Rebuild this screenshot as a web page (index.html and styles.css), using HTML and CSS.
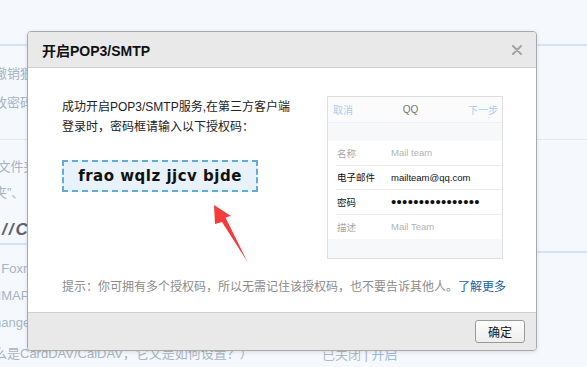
FILE: index.html
```html
<!DOCTYPE html>
<html lang="zh-CN">
<head>
    <meta charset="UTF-8">
    <meta name="viewport" content="width=device-width, initial-scale=1.0">
    <title>开启POP3/SMTP</title>
    <link rel="stylesheet" href="styles.css">
</head>
<body>
    <div class="page">
        <div class="page-left">
            <div class="sec sec-top">
                <div class="bg-row">撤销狠</div>
                <div class="bg-row">改密码</div>
            </div>
            <div class="sec sec-mid">
                <div class="bg-row">&nbsp;文件夹</div>
                <div class="bg-row">夹”、</div>
            </div>
            <div class="sec-head">//CardDAV</div>
            <div class="sec sec-low">
                <div class="bg-row">&nbsp; Foxmail</div>
                <div class="bg-row">&nbsp;IMAP，</div>
                <div class="bg-row">hange</div>
                <div class="bg-row bg-last">么是CardDAV/CalDAV，它又是如何设置？）</div>
            </div>
        </div>
        <div class="page-right">
            <div class="rsec rsec-top"></div>
            <div class="rsec rsec-mid"></div>
            <div class="rsec rsec-low"></div>
            <div class="bg-status">已关闭 | <span class="bg-link">开启</span></div>
        </div>
    </div>

    <div class="dialog">
        <div class="dialog-head">
            <span class="dialog-title">开启POP3/SMTP</span>
            <svg class="dialog-close" width="10" height="10" viewBox="0 0 10 10">
                <path d="M1 1 L9 9 M9 1 L1 9" stroke="#a3a3a3" stroke-width="2" stroke-linecap="round"/>
            </svg>
        </div>
        <div class="dialog-body">
            <div class="body-main">
                <div class="body-left">
                    <p class="intro">成功开启POP3/SMTP服务,在第三方客户端<br>登录时，密码框请输入以下授权码：</p>
                    <div class="code">frao wqlz jjcv bjde</div>
                    <svg class="arrow" width="38" height="60" viewBox="0 0 38 60">
                        <polygon points="2,2 19,13 13.5,14.5 35.5,59 10,19 3,21" fill="#f43c3c"/>
                    </svg>
                </div>
                <div class="shot">
                    <div class="shot-head">
                        <span class="shot-btn">取消</span>
                        <span class="shot-title">QQ</span>
                        <span class="shot-btn">下一步</span>
                    </div>
                    <div class="shot-gap"></div>
                    <div class="shot-list">
                        <div class="shot-row"><span class="shot-label">名称</span><span class="shot-hint">Mail team</span></div>
                        <div class="shot-row"><span class="shot-label on">电子邮件</span><span class="shot-val">mailteam@qq.com</span></div>
                        <div class="shot-row"><span class="shot-label on">密码</span><span class="shot-dots">••••••••••••••••</span></div>
                        <div class="shot-row"><span class="shot-label">描述</span><span class="shot-hint">Mail Team</span></div>
                    </div>
                </div>
            </div>
            <p class="tip">提示：你可拥有多个授权码，所以无需记住该授权码，也不要告诉其他人。<a class="tip-link" href="#">了解更多</a></p>
        </div>
        <div class="dialog-foot">
            <button class="btn">确定</button>
        </div>
    </div>
</body>
</html>
```

FILE: styles.css
```css
body {
    margin: 0;
    height: 367px;
    overflow: hidden;
    background: #f5f8fc;
    font-family: "Liberation Sans", "Noto Sans CJK SC", sans-serif;
    font-size: 12px;
    position: relative;
}

/* page behind the dialog */
.page {
    display: flex;
    height: 367px;
    color: #a7b4c4;
    font-size: 13px;
}

.page-left {
    width: 300px;
    margin-left: -6px;
    white-space: nowrap;
}

.page-right {
    flex: 1;
    padding-left: 28px;
}

.sec {
    border-top: 2px solid #d4e3f5;
}

.sec-top {
    margin-top: 44px;
    padding: 13px 0 22px;
}

.sec-mid {
    border-top: 1px solid #e3e8ee;
    padding-top: 14px;
}

.bg-row {
    height: 26px;
    line-height: 26px;
}

.sec-top .bg-row {
    height: 29px;
    line-height: 29px;
}

.sec-head {
    padding: 14px 0 3px 8px;
    line-height: 20px;
    font-size: 17px;
    font-weight: bold;
    font-style: italic;
    letter-spacing: 2px;
    color: #5f646b;
}

.sec-low {
    padding-top: 10px;
}

.sec-low .bg-row {
    height: 27px;
    line-height: 27px;
}

.bg-last {
    margin-top: 4px;
}

.rsec-top {
    margin-top: 44px;
    height: 93px;
    border-top: 2px solid #d4e3f5;
    border-bottom: 1px solid #e3e8ee;
}

.rsec-mid {
    height: 111px;
    border-bottom: 2px solid #d4e3f5;
}

.rsec-low {
    height: 93px;
}

.bg-status {
    line-height: 18px;
    color: #b0b8c2;
}

.bg-link {
    color: #9bbbe0;
}

/* dialog */
.dialog {
    position: absolute;
    left: 27px;
    top: 31px;
    width: 508px;
    border: 1px solid #a9a9a9;
    border-radius: 4px;
    background: #fff;
    box-shadow: 0 1px 4px rgba(0, 0, 0, 0.12);
    overflow: hidden;
}

.dialog-head {
    display: flex;
    align-items: center;
    justify-content: space-between;
    height: 35px;
    padding: 0 14px 0 14px;
    background: #e9e9e9;
    border-bottom: 1px solid #cfcfcf;
}

.dialog-title {
    font-size: 14px;
    font-weight: bold;
    color: #111;
}

.dialog-close {
    display: block;
    margin-top: 1px;
}

.dialog-body {
    padding: 28px 33px 16px 34px;
}

.body-main {
    display: flex;
    justify-content: space-between;
}

.intro {
    margin: 1px 0 0;
    line-height: 20px;
    color: #222;
}

.code {
    width: 192px;
    height: 28px;
    margin-top: 23px;
    border: 2px dashed #64acd6;
    background: #e7f2fa;
    text-align: center;
    line-height: 28px;
    font-family: "DejaVu Sans", sans-serif;
    font-size: 15px;
    font-weight: bold;
    letter-spacing: 0.5px;
    color: #111;
}

.arrow {
    display: block;
    margin: 11px 0 0 150px;
}

/* phone screenshot */
.shot {
    width: 174px;
    height: 161px;
    border: 1px solid #dedede;
    background: #f7f8fa;
    font-family: "Liberation Sans", "Noto Sans CJK SC", sans-serif;
    font-size: 9.5px;
}

.shot-head {
    display: flex;
    align-items: center;
    justify-content: space-between;
    height: 25px;
    padding: 0 4px 0 5px;
    background: #fbfbfc;
    border-bottom: 1px solid #eef0f2;
}

.shot-btn {
    color: #a9cdee;
    font-size: 10px;
}

.shot-title {
    color: #777;
    font-size: 10px;
}

.shot-gap {
    height: 18px;
}

.shot-list {
    background: #fff;
}

.shot-row {
    display: flex;
    align-items: center;
    height: 23.5px;
    margin-left: 8px;
    padding-left: 1px;
    border-bottom: 1px solid #ececec;
}

.shot-row:last-child {
    border-bottom: none;
    height: 24.5px;
}

.shot-label {
    width: 54px;
    color: #a6a6a6;
}

.shot-label.on {
    color: #111;
}

.shot-hint {
    color: #b3b3b3;
}

.shot-val {
    color: #111;
}

.shot-dots {
    color: #111;
    font-size: 15px;
    letter-spacing: 0.3px;
    line-height: 1;
}

.tip {
    margin: 15px 0 0;
    line-height: 18px;
    color: #8c8c8c;
    white-space: nowrap;
}

.tip-link {
    color: #1c5ea6;
    text-decoration: none;
}

.dialog-foot {
    display: flex;
    justify-content: flex-end;
    height: 37px;
    padding: 0 11px;
    align-items: center;
    background: #e9e9e9;
    border-top: 1px solid #cfcfcf;
}

.btn {
    width: 50px;
    height: 23px;
    padding: 0;
    border: 1px solid #999;
    border-radius: 3px;
    background: linear-gradient(#fdfdfd, #eeeeee);
    font-family: "Liberation Sans", "Noto Sans CJK SC", sans-serif;
    font-size: 12px;
    color: #111;
}
```
